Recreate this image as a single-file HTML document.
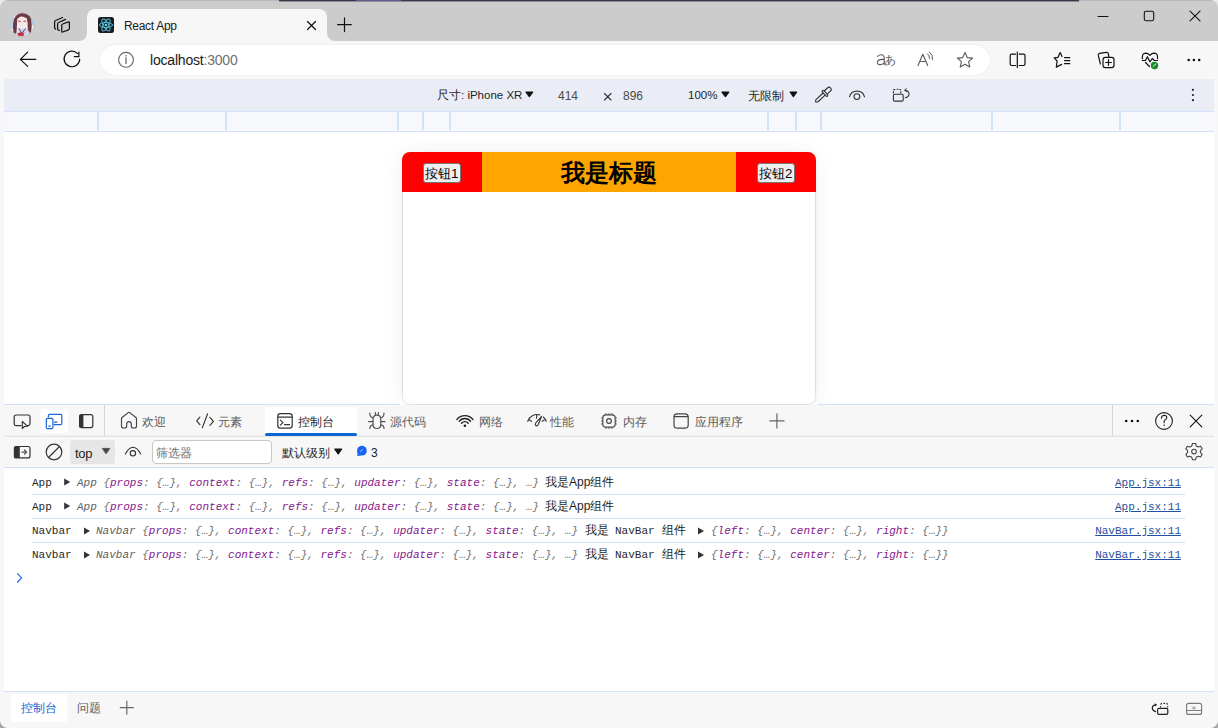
<!DOCTYPE html>
<html><head><meta charset="utf-8">
<style>
*{box-sizing:border-box;margin:0;padding:0}
html,body{width:1218px;height:728px;overflow:hidden;background:#cccccc;font-family:"Liberation Sans",sans-serif;position:relative}
.a{position:absolute}
svg.i{position:absolute;left:0;top:0;overflow:visible}
.t{position:absolute;white-space:nowrap;line-height:1}
.m{font-family:"Liberation Mono",monospace}
</style></head><body>
<!-- TAB STRIP -->
<div class="a" style="left:0;top:0;width:1218px;height:1px;background:#bababa"></div>
<div class="a" style="left:279px;top:0;width:800px;height:1px;background:#363a48"></div><div class="a" style="left:279px;top:1px;width:800px;height:1px;background:#8a8d96"></div><div class="a" style="left:356px;top:0;width:45px;height:1px;background:#6a5a90"></div>
<div class="a" style="left:79px;top:33px;width:264px;height:8px;background:#f7f7f7"></div>
<div class="a" style="left:63px;top:25px;width:24px;height:16px;background:#cccccc;border-bottom-right-radius:8px"></div>
<div class="a" style="left:327px;top:25px;width:24px;height:16px;background:#cccccc;border-bottom-left-radius:8px"></div>
<div class="a" style="left:87px;top:9px;width:240px;height:33px;background:#f7f7f7;border-radius:8px 8px 0 0"></div>
<div class="t" style="left:124px;top:20px;font-size:12px;letter-spacing:-0.3px;color:#1a1a1a">React App</div>

<!-- TOOLBAR -->
<div class="a" style="left:0;top:41px;width:1218px;height:687px;background:#f7f7f7"></div>
<div class="a" style="left:100px;top:45px;width:890px;height:30px;background:#fff;border-radius:15px;box-shadow:0 0 1.5px rgba(0,0,0,.12)"></div>
<div class="t" style="left:150px;top:53px;font-size:14px;letter-spacing:-0.2px;color:#1a1a1a">localhost<span style="color:#6f6f6f">:3000</span></div>
<!-- CONTENT -->
<div class="a" style="left:4px;top:79px;width:1210px;height:32px;background:#eaedf5"></div>
<div class="a" style="left:4px;top:111px;width:1210px;height:1px;background:#d3e1fb"></div>
<div class="a" style="left:4px;top:112px;width:1210px;height:19px;background:#f6f8fc"></div>
<div class="a" style="left:4px;top:131px;width:1210px;height:1px;background:#d3e1fb"></div>
<div class="a" style="left:97px;top:112px;width:2px;height:18px;background:#d3e1fb"></div>
<div class="a" style="left:225px;top:112px;width:2px;height:18px;background:#d3e1fb"></div>
<div class="a" style="left:397px;top:112px;width:2px;height:18px;background:#d3e1fb"></div>
<div class="a" style="left:422px;top:112px;width:2px;height:18px;background:#d3e1fb"></div>
<div class="a" style="left:449px;top:112px;width:2px;height:18px;background:#d3e1fb"></div>
<div class="a" style="left:767px;top:112px;width:2px;height:18px;background:#d3e1fb"></div>
<div class="a" style="left:795px;top:112px;width:2px;height:18px;background:#d3e1fb"></div>
<div class="a" style="left:820px;top:112px;width:2px;height:18px;background:#d3e1fb"></div>
<div class="a" style="left:991px;top:112px;width:2px;height:18px;background:#d3e1fb"></div>
<div class="a" style="left:1119px;top:112px;width:2px;height:18px;background:#d3e1fb"></div>
<div class="a" style="left:4px;top:132px;width:1210px;height:273px;background:#fff"></div>

<div class="t" style="left:437px;top:90px;font-size:11.5px;color:#1f1f1f">尺寸: iPhone XR</div>
<div class="t" style="left:558px;top:90px;font-size:12px;color:#4a4a4a">414</div>
<div class="t" style="left:623px;top:90px;font-size:12px;color:#4a4a4a">896</div>
<div class="t" style="left:688px;top:90px;font-size:11.5px;color:#1f1f1f">100%</div>
<div class="t" style="left:748px;top:90px;font-size:12px;color:#1f1f1f">无限制</div>

<!-- PHONE -->
<div class="a" style="left:402px;top:152px;width:414px;height:253px;background:#fff;border-radius:8px;box-shadow:0 0 24px rgba(0,0,0,.06),0 0 3px rgba(0,0,0,.05);overflow:hidden">
  <div class="a" style="left:0;top:0;width:414px;height:253px;border:1px solid #e0e0e0;border-radius:8px"></div>
  <div class="a" style="left:0;top:0;width:80px;height:40px;background:#f00"></div>
  <div class="a" style="left:80px;top:0;width:254px;height:40px;background:#ffa500"></div>
  <div class="a" style="left:334px;top:0;width:80px;height:40px;background:#f00"></div>
  <div class="a" style="left:21px;top:11px;width:38px;height:20px;background:#efefef;border:1px solid #767676;border-radius:3px"></div>
  <div class="t" style="left:23px;top:15px;font-size:13.33px;color:#000">按钮1</div>
  <div class="a" style="left:355px;top:11px;width:38px;height:20px;background:#efefef;border:1px solid #767676;border-radius:3px"></div>
  <div class="t" style="left:357px;top:15px;font-size:13.33px;color:#000">按钮2</div>
  <div class="t" style="left:80px;top:9px;width:254px;text-align:center;font-size:24px;font-weight:bold;color:#000">我是标题</div>
</div>

<!-- DEVTOOLS -->
<div class="a" style="left:4px;top:404px;width:396px;height:1px;background:#d3e1fb"></div>
<div class="a" style="left:818px;top:404px;width:396px;height:1px;background:#d3e1fb"></div>
<div class="a" style="left:4px;top:405px;width:1210px;height:31px;background:#f7f7f7"></div>
<div class="a" style="left:4px;top:435px;width:1210px;height:1px;background:#f1f1f1"></div><div class="a" style="left:4px;top:436px;width:1210px;height:1px;background:#e4e4e4"></div>
<div class="a" style="left:4px;top:437px;width:1210px;height:30px;background:#f7f7f7"></div>
<div class="a" style="left:4px;top:467px;width:1210px;height:1px;background:#d3e1fb"></div>
<div class="a" style="left:4px;top:468px;width:1210px;height:223px;background:#fff"></div>
<div class="a" style="left:4px;top:691px;width:1210px;height:1px;background:#d3e1fb"></div>

<div class="a" style="left:104px;top:405px;width:1px;height:31px;background:#d6d6d6"></div>
<div class="a" style="left:1112px;top:405px;width:1px;height:31px;background:#d6d6d6"></div>
<div class="a" style="left:40px;top:409px;width:28px;height:24px;background:#fff;border-radius:4px"></div>
<div class="a" style="left:265px;top:407px;width:92px;height:29px;background:#fff;border-radius:4px 4px 0 0"></div>
<div class="a" style="left:265px;top:433px;width:92px;height:3px;background:#0b66d6;border-radius:2px"></div>
<div class="t" style="left:142px;top:416px;font-size:12px;color:#5c5c5c">欢迎</div>
<div class="t" style="left:218px;top:416px;font-size:12px;color:#5c5c5c">元素</div>
<div class="t" style="left:298px;top:416px;font-size:12px;color:#1f1f1f">控制台</div>
<div class="t" style="left:390px;top:416px;font-size:12px;color:#5c5c5c">源代码</div>
<div class="t" style="left:479px;top:416px;font-size:12px;color:#5c5c5c">网络</div>
<div class="t" style="left:550px;top:416px;font-size:12px;color:#5c5c5c">性能</div>
<div class="t" style="left:623px;top:416px;font-size:12px;color:#5c5c5c">内存</div>
<div class="t" style="left:695px;top:416px;font-size:12px;color:#5c5c5c">应用程序</div>

<!-- console toolbar -->
<div class="a" style="left:70px;top:440px;width:45px;height:24px;background:#e6e6e6;border-radius:3px"></div>
<div class="t" style="left:75px;top:447px;font-size:13px;letter-spacing:-0.3px;color:#1f1f1f">top</div>
<div class="a" style="left:152px;top:440px;width:120px;height:24px;background:#fff;border:1px solid #c8c8c8;border-radius:4px"></div>
<div class="t" style="left:156px;top:447px;font-size:12px;color:#6e6e6e">筛选器</div>
<div class="t" style="left:282px;top:447px;font-size:12px;color:#1f1f1f">默认级别</div>
<div class="t" style="left:371px;top:447px;font-size:12px;color:#1f1f1f">3</div>
<!-- messages -->
<div class="a" style="left:32px;top:494px;width:1153px;height:1px;background:#d3e1fb"></div>
<div class="a" style="left:32px;top:518px;width:1153px;height:1px;background:#d3e1fb"></div>
<div class="a" style="left:32px;top:542px;width:1153px;height:1px;background:#d3e1fb"></div>
<style>
.row{position:absolute;left:0;white-space:nowrap;font-size:11px;line-height:14px;color:#1f1f1f}
.row span{position:absolute;top:0}
.k{color:#84178c}.g{color:#5e5e5e}.p{color:#707070}
.lk{position:absolute;right:37px;font-family:"Liberation Mono",monospace;font-size:11px;color:#1f4f9f;text-decoration:underline;line-height:14px}
</style>
<div class="row" style="top:476px">
 <span class="m" style="left:32px">App</span>
 <span class="m" style="left:77px;font-style:italic"><span class="g" style="position:static">App </span><span class="p" style="position:static">{</span><span class="k" style="position:static">props</span><span class="p" style="position:static">: {…}, </span><span class="k" style="position:static">context</span><span class="p" style="position:static">: {…}, </span><span class="k" style="position:static">refs</span><span class="p" style="position:static">: {…}, </span><span class="k" style="position:static">updater</span><span class="p" style="position:static">: {…}, </span><span class="k" style="position:static">state</span><span class="p" style="position:static">: {…}, …}</span></span>
 <span style="left:545px;font-size:12px;top:-1px">我是App组件</span>
</div>
<div class="lk" style="top:476px">App.jsx:11</div>
<div class="row" style="top:500px">
 <span class="m" style="left:32px">App</span>
 <span class="m" style="left:77px;font-style:italic"><span class="g" style="position:static">App </span><span class="p" style="position:static">{</span><span class="k" style="position:static">props</span><span class="p" style="position:static">: {…}, </span><span class="k" style="position:static">context</span><span class="p" style="position:static">: {…}, </span><span class="k" style="position:static">refs</span><span class="p" style="position:static">: {…}, </span><span class="k" style="position:static">updater</span><span class="p" style="position:static">: {…}, </span><span class="k" style="position:static">state</span><span class="p" style="position:static">: {…}, …}</span></span>
 <span style="left:545px;font-size:12px;top:-1px">我是App组件</span>
</div>
<div class="lk" style="top:500px">App.jsx:11</div>
<div class="row" style="top:524px">
 <span class="m" style="left:32px">Navbar</span>
 <span class="m" style="left:96px;font-style:italic"><span class="g" style="position:static">Navbar </span><span class="p" style="position:static">{</span><span class="k" style="position:static">props</span><span class="p" style="position:static">: {…}, </span><span class="k" style="position:static">context</span><span class="p" style="position:static">: {…}, </span><span class="k" style="position:static">refs</span><span class="p" style="position:static">: {…}, </span><span class="k" style="position:static">updater</span><span class="p" style="position:static">: {…}, </span><span class="k" style="position:static">state</span><span class="p" style="position:static">: {…}, …}</span></span>
 <span style="left:585px;font-size:12px;top:-1px">我是</span><span class="m" style="left:615px">NavBar</span><span style="left:662px;font-size:12px;top:-1px">组件</span>
 <span class="m" style="left:711px;font-style:italic"><span class="p" style="position:static">{</span><span class="k" style="position:static">left</span><span class="p" style="position:static">: {…}, </span><span class="k" style="position:static">center</span><span class="p" style="position:static">: {…}, </span><span class="k" style="position:static">right</span><span class="p" style="position:static">: {…}}</span></span>
</div>
<div class="lk" style="top:524px">NavBar.jsx:11</div>
<div class="row" style="top:548px">
 <span class="m" style="left:32px">Navbar</span>
 <span class="m" style="left:96px;font-style:italic"><span class="g" style="position:static">Navbar </span><span class="p" style="position:static">{</span><span class="k" style="position:static">props</span><span class="p" style="position:static">: {…}, </span><span class="k" style="position:static">context</span><span class="p" style="position:static">: {…}, </span><span class="k" style="position:static">refs</span><span class="p" style="position:static">: {…}, </span><span class="k" style="position:static">updater</span><span class="p" style="position:static">: {…}, </span><span class="k" style="position:static">state</span><span class="p" style="position:static">: {…}, …}</span></span>
 <span style="left:585px;font-size:12px;top:-1px">我是</span><span class="m" style="left:615px">NavBar</span><span style="left:662px;font-size:12px;top:-1px">组件</span>
 <span class="m" style="left:711px;font-style:italic"><span class="p" style="position:static">{</span><span class="k" style="position:static">left</span><span class="p" style="position:static">: {…}, </span><span class="k" style="position:static">center</span><span class="p" style="position:static">: {…}, </span><span class="k" style="position:static">right</span><span class="p" style="position:static">: {…}}</span></span>
</div>
<div class="lk" style="top:548px">NavBar.jsx:11</div>

<!-- drawer -->
<div class="a" style="left:11px;top:694px;width:56px;height:28px;background:#fff;border-radius:3px"></div>
<div class="t" style="left:21px;top:702px;font-size:12px;color:#1a5fd0">控制台</div>
<div class="t" style="left:77px;top:702px;font-size:12px;color:#5c5c5c">问题</div>
<svg class="i" width="1218" height="728" viewBox="0 0 1218 728" fill="none" stroke-linecap="round" stroke-linejoin="round">
<!-- avatar -->
<defs><clipPath id="av"><circle cx="22" cy="24.8" r="12"/></clipPath></defs>
<g clip-path="url(#av)">
 <rect x="9" y="12" width="26" height="26" fill="#eef1f8"/>
 <rect x="9" y="17" width="5" height="12" fill="#b9d2ef"/>
 <rect x="30" y="15" width="5" height="10" fill="#a9c8ee"/>
 <path d="M13.5,33 Q12,22 15,17 Q19,12 24,12.5 Q29.5,13.5 31,19 Q32.5,26 31,34 L28,35 L27.5,22 Q25,16 21,16.5 Q17.5,17.5 17,24 L16.5,34 Z" fill="#6e3c45"/>
 <path d="M17.2,19 Q21,15.5 27,18.5 L27.2,24 Q24,28 20.5,27 Q17.2,25 17.2,22 Z" fill="#f6e7e3"/>
 <path d="M18.6,21.2 L20.4,21.2 M23.8,21.2 L25.6,21.2" stroke="#a44456" stroke-width="1.1"/>
 <path d="M15.5,38 L17,30 Q21.5,27.5 27,29.5 Q30,31 31,38 Z" fill="#d8d2e6"/>
 <path d="M19,28.5 L22,33.5 L25.5,28.5" stroke="#3b4466" stroke-width="0.9"/>
 <path d="M17.5,33.5 L20.5,32.2 L22.5,33.8 L24.5,32.2 L23,37 L21,35.5 L18.5,37 Z" fill="#c7273a"/>
</g>
<circle cx="22" cy="24.8" r="12" stroke="#c2c2c2" stroke-width="0.8"/>
<!-- tab actions -->
<g stroke="#111" stroke-width="1.25">
 <path d="M61.75,25.3 Q61.75,24.3 62.7,24 L68.4,21.9 Q69.4,21.6 69.4,22.6 L69.4,28.6 Q69.4,29.5 68.5,29.8 L62.7,32 Q61.75,32.4 61.75,31.4 Z"/>
 <path d="M59.4,30.4 Q57.6,30.4 57.6,28.8 L57.6,24 Q57.6,22.9 58.6,22.5 L65.5,19.4"/>
 <path d="M55.6,29.2 Q54.6,28.6 54.6,27.6 L54.6,22 Q54.6,20.9 55.6,20.5 L62.5,17.5"/>
</g>
<!-- favicon -->
<rect x="98" y="17" width="16" height="16" rx="2.5" fill="#1c1c1e"/>
<g stroke="#4fbad8" stroke-width="1" transform="translate(106,25)">
 <ellipse rx="6.6" ry="2.6"/><ellipse rx="6.6" ry="2.6" transform="rotate(60)"/><ellipse rx="6.6" ry="2.6" transform="rotate(120)"/>
</g>
<circle cx="106" cy="25" r="1.3" fill="#5cd0f0"/>
<!-- tab close / new -->
<path d="M307.5,21.5 L315.5,29.5 M315.5,21.5 L307.5,29.5" stroke="#111" stroke-width="1.2"/>
<path d="M344.5,17.8 L344.5,31.6 M337.6,24.7 L351.3,24.7" stroke="#111" stroke-width="1.2"/>
<!-- window controls -->
<path d="M1098,16.5 L1108,16.5" stroke="#111" stroke-width="1.1"/>
<rect x="1144.3" y="11.3" width="9.4" height="9.4" rx="1.6" stroke="#111" stroke-width="1.1"/>
<path d="M1190,11.2 L1200,20.8 M1200,11.2 L1190,20.8" stroke="#111" stroke-width="1.1"/>
<!-- back / refresh -->
<path d="M20.4,59.4 L35.8,59.4 M27.6,52.2 L20.4,59.4 L27.6,66.4" stroke="#111" stroke-width="1.2"/>
<path d="M79.7,59 A7.8,7.8 0 1 1 77.6,53.6" stroke="#111" stroke-width="1.2"/>
<path d="M74.3,56.7 L78.9,56.7 L78.9,52.1" stroke="#111" stroke-width="1.2"/>
<!-- info -->
<circle cx="126" cy="59.8" r="7.4" stroke="#666" stroke-width="1.1"/>
<path d="M126,58 L126,63.5" stroke="#666" stroke-width="1.3"/>
<circle cx="126" cy="55.8" r="0.8" fill="#666"/>
<!-- read aloud etc -->
<path d="M877.6,56.3 Q879.2,54.6 881.3,54.7 Q884.2,54.9 884.2,58.2 L884.2,64.4 M884.2,59.6 Q878.8,58.8 877.4,61.6 Q876.9,64.6 880.2,64.6 Q883,64.5 884.2,62.4" stroke="#5a5a5a" stroke-width="1.1"/>
<text x="884.4" y="64.3" font-family="Liberation Sans" font-size="11.5" fill="#5a5a5a">あ</text>
<path d="M918,65.5 L922.8,54.2 L927.7,65.5 M919.8,61.5 L925.8,61.5" stroke="#5a5a5a" stroke-width="1.1"/>
<path d="M927.5,53.8 Q930,55.5 929.5,58.5 M929.5,52 Q933.5,55 932.5,59.8" stroke="#5a5a5a" stroke-width="1"/>
<path d="M965,52.6 L967.3,57.6 L972.6,58.1 L968.6,61.6 L969.8,67 L965,64.2 L960.2,67 L961.4,61.6 L957.4,58.1 L962.7,57.6 Z" stroke="#5a5a5a" stroke-width="1.1"/>
<!-- right toolbar -->
<path d="M1015.5,54.2 L1011.6,54.2 Q1010.2,54.2 1010.2,55.6 L1010.2,64.1 Q1010.2,65.5 1011.6,65.5 L1015.5,65.5 M1019.2,54.2 L1023.6,54.2 Q1025,54.2 1025,55.6 L1025,64.1 Q1025,65.5 1023.6,65.5 L1019.2,65.5 M1017.3,52 L1017.3,67.6" stroke="#111" stroke-width="1.2"/>
<path d="M1062,56.5 L1060.2,52.6 L1058,57.3 L1054.2,57.8 L1057.1,61 L1056.3,67.1 L1061.6,64.4" stroke="#111" stroke-width="1.2"/>
<path d="M1064.5,57.6 L1069.8,57.6 M1064.5,60.6 L1069.8,60.6 M1064.5,63.7 L1069.8,63.7" stroke="#111" stroke-width="1.2"/>
<path d="M1100.4,64 L1098.3,55.4 Q1098,53.8 1099.6,53.4 L1106.3,52.3 Q1107.9,52.1 1108.4,53.6 L1108.8,56.6" stroke="#111" stroke-width="1.2"/>
<rect x="1103" y="57.3" width="11" height="10.3" rx="2.3" stroke="#111" stroke-width="1.2"/>
<path d="M1108.5,59.6 L1108.5,65.3 M1105.6,62.5 L1111.4,62.5" stroke="#111" stroke-width="1.2"/>
<path d="M1142.4,58.6 Q1141.8,53.2 1145.7,53.1 Q1148,53.1 1149.9,55.3 Q1151.8,53.1 1154.2,53.1 Q1158.1,53.2 1157.5,58.6" stroke="#111" stroke-width="1.2"/>
<path d="M1142.3,60.5 L1145.5,60.5 L1147.4,56.7 L1149.9,61.8 L1152.3,58.5 L1154.3,60.5 L1157.6,60.5" stroke="#111" stroke-width="1.2"/>
<path d="M1145.5,62.5 L1149.4,66.5" stroke="#111" stroke-width="1.2"/>
<circle cx="1154.5" cy="65.5" r="3.7" fill="#168b2c"/>
<path d="M1153.1,66.4 L1155.9,63.9" stroke="#e8f5ea" stroke-width="1"/>
<circle cx="1188.7" cy="60" r="1.3" fill="#111"/><circle cx="1193.9" cy="60" r="1.3" fill="#111"/><circle cx="1199.2" cy="60" r="1.3" fill="#111"/>
<!-- kebab device toolbar -->
<circle cx="1192.9" cy="89.8" r="1.1" fill="#222"/><circle cx="1192.9" cy="95" r="1.1" fill="#222"/><circle cx="1192.9" cy="100.2" r="1.1" fill="#222"/>
<!-- device toolbar triangles & x -->
<path d="M526,92.1 L532.7,92.1 L529.35,96.6 Z" fill="#111" stroke="#111" stroke-width="1.2"/>
<path d="M604.5,93.5 L611,100 M611,93.5 L604.5,100" stroke="#333" stroke-width="1.1"/>
<path d="M722,92.1 L728.8,92.1 L725.4,96.6 Z" fill="#111" stroke="#111" stroke-width="1.2"/>
<path d="M790.2,92.1 L796.6,92.1 L793.4,96.6 Z" fill="#111" stroke="#111" stroke-width="1.2"/>
<!-- eyedropper -->
<g transform="translate(815.6,102) rotate(-43)" stroke="#333" stroke-width="1.1">
 <path d="M0,0 L1.6,-1.5 L11.6,-1.5 M0,0 L1.6,1.5 L11.6,1.5"/>
 <rect x="11.6" y="-3.7" width="2.2" height="7.4" rx="1.1"/>
 <path d="M13.8,-2.2 L18.2,-2.2 Q20.5,-2.2 20.5,0 Q20.5,2.2 18.2,2.2 L13.8,2.2"/>
</g>
<!-- eye -->
<path d="M849.5,96.8 A7.7,7.4 0 0 1 864.5,96.8" stroke="#333" stroke-width="1.1"/>
<circle cx="856.9" cy="96.6" r="2.9" stroke="#333" stroke-width="1.1"/>
<!-- rotate -->
<rect x="893.4" y="94.3" width="9.8" height="6.8" rx="1.2" stroke="#333" stroke-width="1.1"/>
<path d="M893.4,93 L893.4,91.5 M893.4,89.8 L895,89.5 M897,89.3 L898,89.3 M899.7,89.5 L900.8,89.8 M900.8,91.5 L900.8,93" stroke="#333" stroke-width="1.1"/>
<path d="M905,90.2 Q909.2,91 909,94 Q908.8,97 905.3,97.8" stroke="#333" stroke-width="1.1"/>
<path d="M906.3,88.6 L904.6,90.2 L906.5,91.6" stroke="#333" stroke-width="1"/>
<!-- devtools tab bar icons -->
<path d="M21,425.6 L16,425.6 Q14.2,425.6 14.2,423.8 L14.2,416.8 Q14.2,415 16,415 L28.2,415 Q30,415 30,416.8 L30,423.8 Q30,425.6 28.2,425.6 L27.5,425.6" stroke="#333" stroke-width="1.2"/>
<path d="M22.3,421.5 L22.3,428.5 L24.2,426.6 L27.4,426.2 Z" stroke="#333" stroke-width="1.1"/>
<g stroke="#1b65d6" stroke-width="1.2">
 <path d="M48.4,417 L48.4,415.6 Q48.4,414.4 49.6,414.4 L60.6,414.4 Q61.8,414.4 61.8,415.6 L61.8,423.4 Q61.8,424.6 60.6,424.6 L54,424.6"/>
 <rect x="46.3" y="418.4" width="6.6" height="10.2" rx="1.2"/>
 <path d="M48.8,426.2 L50.3,426.2 M54.5,422.2 L57,422.2"/>
</g>
<rect x="79.6" y="414.6" width="13.2" height="13" rx="2" stroke="#333" stroke-width="1.2"/>
<rect x="79.6" y="414.6" width="3.8" height="13" fill="#333"/>
<!-- home -->
<path d="M121.5,426 L121.5,418.8 Q121.5,418 122.1,417.5 L128.3,412.6 Q129,412.1 129.7,412.6 L135.9,417.5 Q136.5,418 136.5,418.8 L136.5,426 Q136.5,428 134.5,428 L133.3,428 Q131.3,428 131.3,426 L131.3,424 Q131.3,421.6 129,421.6 Q126.7,421.6 126.7,424 L126.7,426 Q126.7,428 124.7,428 L123.5,428 Q121.5,428 121.5,426 Z" stroke="#444" stroke-width="1.15"/>
<!-- </> -->
<path d="M199.9,417.2 L196.7,420.9 L199.9,424.7 M207.6,413.8 L202.4,427.6 M209.9,417.4 L213.4,421.4 L209.9,425.3" stroke="#3a3a3a" stroke-width="1.2"/>
<!-- console icon -->
<rect x="277.8" y="413.7" width="14.4" height="14.4" rx="2.6" stroke="#333" stroke-width="1.2"/>
<path d="M278,417.2 L292,417.2" stroke="#333" stroke-width="1.2"/><path d="M280.3,420.2 L283,422.7 L280.3,425.2 M284.5,424.6 L289.6,424.6" stroke="#333" stroke-width="1.1"/>
<!-- bug -->
<g stroke="#555" stroke-width="1.2">
 <path d="M373,420 Q373,415.2 376.9,415.2 Q380.8,415.2 380.8,420 L380.8,424.5 Q380.8,428.5 376.9,428.5 Q373,428.5 373,424.5 Z"/>
 <path d="M375.3,412.6 L375.6,414.6 M378.5,412.6 L378.2,414.6"/>
 <path d="M369.8,413 Q369.8,417.2 373,417.8 M368.6,421.6 L373,421.6 M369.8,428.5 Q369.8,425.3 373,424.8 M384,413 Q384,417.2 380.8,417.8 M385.2,421.6 L380.8,421.6 M384,428.5 Q384,425.3 380.8,424.8"/>
</g>
<!-- wifi -->
<path d="M456.86,419.52 A10.2,10.2 0 0 1 472.94,419.52 M459.15,421.31 A7.3,7.3 0 0 1 470.65,421.31 M461.59,423.21 A4.2,4.2 0 0 1 468.21,423.21 " stroke="#222" stroke-width="1.35"/>
<circle cx="464.9" cy="425.8" r="1.3" fill="#222"/>
<!-- perf -->
<g stroke="#3a3a3a" stroke-width="1.15">
<path d="M527.7,421.3 A9.6,9.6 0 0 1 539.6,414.9 M543.3,417 A9.6,9.6 0 0 1 546.2,421.3"/>
<path d="M536.6,415 L536.6,418.2 M529.4,420 L531.6,421.3 M544.3,420.1 L542.2,421.3"/>
<path d="M541.6,416.3 L538.4,424.3 Q537.5,426.4 536,425.8 Q534.8,425.1 535.6,423.1 Z"/>
</g>
<!-- chip -->
<rect x="602.8" y="414.8" width="12.4" height="12.4" rx="3.2" stroke="#444" stroke-width="1.15"/>
<circle cx="609" cy="421" r="2.4" stroke="#444" stroke-width="1.15"/>
<path d="M606,413 L606,414.8 M609,413 L609,414.8 M612,413 L612,414.8 M606,427.2 L606,429 M609,427.2 L609,429 M612,427.2 L612,429 M601,418 L602.8,418 M601,421 L602.8,421 M601,424 L602.8,424 M615.2,418 L617,418 M615.2,421 L617,421 M615.2,424 L617,424" stroke="#555" stroke-width="0.9" stroke-linecap="butt"/>
<!-- app window -->
<rect x="674" y="413.9" width="14.2" height="14.2" rx="3.2" stroke="#444" stroke-width="1.2"/>
<path d="M674.2,416.7 L688,416.7" stroke="#444" stroke-width="1.2"/>
<!-- plus -->
<path d="M776.9,413.8 L776.9,428 M769.8,420.9 L784,420.9" stroke="#666" stroke-width="1.2"/>
<!-- more / help / close -->
<circle cx="1126.2" cy="421" r="1.3" fill="#111"/><circle cx="1132" cy="421" r="1.3" fill="#111"/><circle cx="1137.8" cy="421" r="1.3" fill="#111"/>
<circle cx="1164" cy="421" r="8.4" stroke="#222" stroke-width="1.1"/>
<path d="M1161.4,418.3 Q1161.6,415.2 1164.2,415.2 Q1166.8,415.3 1166.8,417.8 Q1166.8,419.5 1164.2,420.6 L1164.2,422.8" stroke="#222" stroke-width="1.1"/>
<circle cx="1164.2" cy="425.3" r="0.8" fill="#222"/>
<path d="M1190.2,415.2 L1201.8,426.8 M1201.8,415.2 L1190.2,426.8" stroke="#111" stroke-width="1.1"/>

<!-- console toolbar icons -->
<rect x="14.4" y="446.5" width="15.6" height="11.4" rx="2" stroke="#333" stroke-width="1.2"/>
<rect x="14.4" y="446.5" width="5.4" height="11.4" fill="#333"/>
<path d="M22,452.2 L26.5,452.2 M24.5,450 L26.6,452.2 L24.5,454.4" stroke="#555" stroke-width="1.2"/>
<circle cx="54" cy="452" r="7.8" stroke="#333" stroke-width="1.2"/>
<path d="M48.5,457.5 L59.5,446.5" stroke="#333" stroke-width="1.2"/>
<path d="M102.6,448.4 L109.8,448.4 L106.2,453.6 Z" fill="#444" stroke="#444" stroke-width="0.8"/>
<path d="M125.3,454 Q133,440.5 140.8,454" stroke="#333" stroke-width="1.1"/>
<circle cx="132.9" cy="453.3" r="2.7" stroke="#333" stroke-width="1.1"/>
<path d="M334.8,449.2 L341.6,449.2 L338.2,453.8 Z" fill="#111" stroke="#111" stroke-width="1.2"/>
<circle cx="361.9" cy="450.7" r="4.9" fill="#1864f0"/><path d="M357.2,456.2 L357.8,451.5 L361.5,455.2 Z" fill="#1864f0"/><path d="M360.6,451.6 L362.6,449.6" stroke="#7ea8f6" stroke-width="1.2"/>
<!-- gear -->
<g transform="translate(1194,451.5)" stroke="#444" stroke-width="1.1">
 <path d="M-1.6,-8 L1.6,-8 L2.2,-5.6 L4.2,-4.5 L6.6,-5.3 L8.2,-2.6 L6.4,-0.9 L6.4,1.2 L8.2,2.8 L6.6,5.5 L4.2,4.7 L2.2,5.8 L1.6,8.2 L-1.6,8.2 L-2.2,5.8 L-4.2,4.7 L-6.6,5.5 L-8.2,2.8 L-6.4,1.2 L-6.4,-0.9 L-8.2,-2.6 L-6.6,-5.3 L-4.2,-4.5 L-2.2,-5.6 Z"/>
 <circle cx="0" cy="0.1" r="2.3"/>
</g>
<!-- triangles in messages -->
<path d="M64.2,478.5 L70.2,482 L64.2,485.5 Z" fill="#333"/>
<path d="M64.2,502.5 L70.2,506 L64.2,509.5 Z" fill="#333"/>
<path d="M84,527.5 L90,531 L84,534.5 Z" fill="#333"/>
<path d="M84,551.5 L90,555 L84,558.5 Z" fill="#333"/>
<path d="M698,527.5 L704,531 L698,534.5 Z" fill="#333"/>
<path d="M698,551.5 L704,555 L698,558.5 Z" fill="#333"/>
<!-- prompt -->
<path d="M17.5,573.6 L21.6,577.9 L17.5,582.2" stroke="#1f6ef2" stroke-width="1.25"/>
<!-- drawer plus -->
<path d="M126.8,701.2 L126.8,714.2 M120.3,707.7 L133.3,707.7" stroke="#666" stroke-width="1.2"/>
<!-- drawer right icons -->
<rect x="1157.6" y="708.3" width="10.2" height="6" rx="1.4" stroke="#222" stroke-width="1.2"/>
<path d="M1160.5,707.6 L1160.5,706.3 M1160.7,704.6 Q1161,703.5 1162,703.4 M1163.5,703.4 L1165,703.4 M1166.4,703.4 Q1167.4,703.5 1167.6,704.6 M1167.7,706.3 L1167.7,707.6" stroke="#222" stroke-width="1.1" stroke-linecap="butt"/>
<path d="M1155.6,711.6 Q1152.3,710.6 1152.3,708 Q1152.3,705.4 1155.3,704.9" stroke="#222" stroke-width="1.2"/>
<path d="M1154.8,703.2 L1157.2,704.8 L1155,706.6 Z" fill="#222"/>
<rect x="1186.6" y="703.4" width="15" height="11" rx="2" stroke="#7a7a7a" stroke-width="1.1"/>
<path d="M1186.6,710.5 L1201.6,710.5" stroke="#7a7a7a" stroke-width="1.1"/>
<path d="M1193.9,710.2 L1193.9,706.8 M1192.2,708.3 L1193.9,706.6 L1195.6,708.3" stroke="#aaa" stroke-width="1.1"/>
</svg>
<div class="a" style="left:0;top:0;width:8px;height:8px;background:radial-gradient(circle at 8px 8px,transparent 7.5px,#e9e9e9 8.5px)"></div>
<div class="a" style="left:1210px;top:0;width:8px;height:8px;background:radial-gradient(circle at 0 8px,transparent 7.5px,#e9e9e9 8.5px)"></div>
<div class="a" style="left:0;top:720px;width:8px;height:8px;background:radial-gradient(circle at 8px 0,transparent 7.5px,#a8a8a8 8.5px)"></div>
<div class="a" style="left:1210px;top:720px;width:8px;height:8px;background:radial-gradient(circle at 0 0,transparent 7.5px,#a8a8a8 8.5px)"></div>
</body></html>
